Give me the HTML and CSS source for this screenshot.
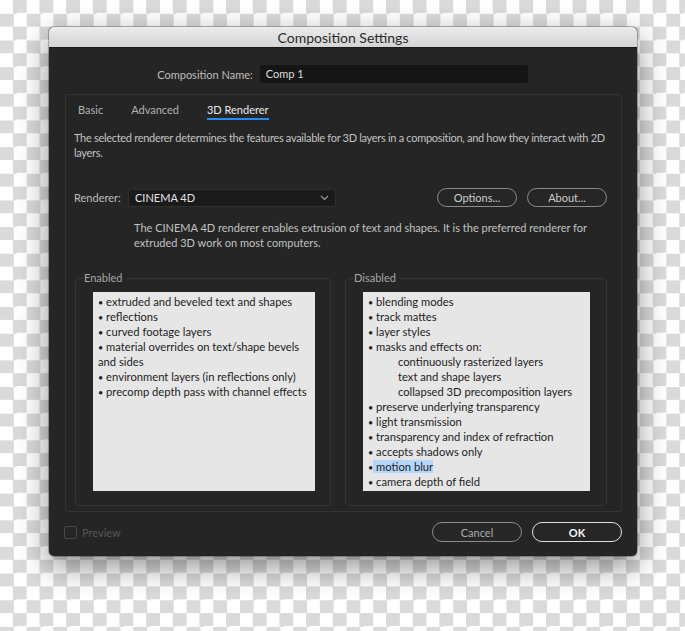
FILE: index.html
```html
<!DOCTYPE html>
<html lang="en">
<head>
    <meta charset="UTF-8">
    <meta name="viewport" content="width=device-width, initial-scale=1.0">
    <title>Composition Settings</title>
    <link rel="stylesheet" href="styles.css">
</head>
<body>
    <div class="window">
        <div class="titlebar">Composition Settings</div>
        <div class="content">
            <div class="name-row">
                <span class="name-label">Composition Name:</span>
                <div class="name-input">Comp 1</div>
            </div>

            <div class="panel">
                <div class="tabs">
                    <span class="tab">Basic</span>
                    <span class="tab">Advanced</span>
                    <span class="tab active">3D Renderer</span>
                </div>

                <p class="desc tight">The selected renderer determines the features available for 3D layers in a composition, and how they interact with 2D<br>layers.</p>

                <div class="renderer-row">
                    <span class="renderer-label">Renderer:</span>
                    <div class="select">
                        <span>CINEMA 4D</span>
                        <svg width="9" height="6" viewBox="0 0 9 6"><polyline points="1,1 4.5,4.5 8,1" fill="none" stroke="#9a9a9a" stroke-width="1.2"/></svg>
                    </div>
                    <div class="spacer"></div>
                    <button class="pill">Options...</button>
                    <button class="pill">About...</button>
                </div>

                <p class="renderer-desc">The CINEMA 4D renderer enables extrusion of text and shapes. It is the preferred renderer for<br>extruded 3D work on most computers.</p>

                <div class="groups">
                    <fieldset class="group">
                        <legend>Enabled</legend>
                        <ul class="list">
                            <li><b>&bull;</b> extruded and beveled text and shapes</li>
                            <li><b>&bull;</b> reflections</li>
                            <li><b>&bull;</b> curved footage layers</li>
                            <li><b>&bull;</b> material overrides on text/shape bevels<br>and sides</li>
                            <li><b>&bull;</b> environment layers (in reflections only)</li>
                            <li><b>&bull;</b> precomp depth pass with channel effects</li>
                        </ul>
                    </fieldset>
                    <fieldset class="group">
                        <legend>Disabled</legend>
                        <ul class="list">
                            <li><b>&bull;</b> blending modes</li>
                            <li><b>&bull;</b> track mattes</li>
                            <li><b>&bull;</b> layer styles</li>
                            <li><b>&bull;</b> masks and effects on:</li>
                            <li class="sub">continuously rasterized layers</li>
                            <li class="sub">text and shape layers</li>
                            <li class="sub">collapsed 3D precomposition layers</li>
                            <li><b>&bull;</b> preserve underlying transparency</li>
                            <li><b>&bull;</b> light transmission</li>
                            <li><b>&bull;</b> transparency and index of refraction</li>
                            <li><b>&bull;</b> accepts shadows only</li>
                            <li><b>&bull;</b><span class="selected"> motion blur</span></li>
                            <li><b>&bull;</b> camera depth of field</li>
                        </ul>
                    </fieldset>
                </div>
            </div>

            <div class="footer">
                <label class="preview"><span class="checkbox"></span>Preview</label>
                <div class="spacer"></div>
                <button class="pill wide">Cancel</button>
                <button class="pill wide ok">OK</button>
            </div>
        </div>
    </div>
</body>
</html>
```

FILE: styles.css
```css
body {
    margin: 0;
    height: 631px;
    overflow: hidden;
    font-family: "Lato", "Liberation Sans", sans-serif;
    font-size: 11px;
    background: repeating-conic-gradient(#dadada 0 25%, #ffffff 0 50%) 0 0 / 26.66px 26.66px;
}

.window {
    width: 588px;
    height: 529px;
    margin: 27px 0 0 49px;
    background: #252525;
    border-radius: 5px;
    overflow: hidden;
    box-shadow: 0 10px 30px rgba(0, 0, 0, 0.45), 0 0 0 1px rgba(0, 0, 0, 0.25);
}

.titlebar {
    height: 21px;
    line-height: 21px;
    text-align: center;
    font-size: 14px;
    color: #2a2a2a;
    background: linear-gradient(#ececec, #d3d3d3);
    border-bottom: 1px solid #1a1a1a;
    box-sizing: border-box;
}

.content {
    padding: 17px 15px 0 16px;
}

.name-row {
    display: flex;
    justify-content: center;
    align-items: center;
    gap: 7px;
    height: 18px;
    margin-left: -2px;
}

.name-label {
    color: #bdbdbd;
}

.name-input {
    width: 262px;
    height: 18px;
    line-height: 18px;
    padding-left: 6px;
    background: #151515;
    border-radius: 3px;
    color: #dcdcdc;
}

.panel {
    margin-top: 11px;
    height: 418px;
    box-sizing: border-box;
    border: 1px solid #343434;
    border-radius: 3px;
    padding: 7px 14px 0 8px;
}

.tabs {
    display: flex;
    gap: 28px;
    margin-left: 4px;
}

.tab {
    line-height: 15px;
    padding-bottom: 1px;
    border-bottom: 2px solid transparent;
    color: #b2b2b2;
}

.tab.active {
    color: #e8e8e8;
    border-bottom-color: #1f8df2;
}

.desc,
.renderer-desc {
    margin: 10px 0 0;
    line-height: 15px;
    color: #c2c2c2;
    white-space: nowrap;
}

.desc.tight {
    letter-spacing: -0.3px;
}

.renderer-row {
    display: flex;
    align-items: center;
    margin-top: 28px;
    height: 19px;
}

.renderer-label {
    color: #bdbdbd;
    width: 54px;
}

.select {
    width: 208px;
    height: 18px;
    padding: 0 6px;
    display: flex;
    align-items: center;
    justify-content: space-between;
    background: #1a1a1a;
    border: 1px solid #2f2f2f;
    box-sizing: border-box;
    color: #e2e2e2;
    border-radius: 2px;
}

.spacer {
    flex: 1;
}

.pill {
    font-family: inherit;
    font-size: 11px;
    height: 19px;
    width: 80px;
    padding: 0;
    margin-left: 10px;
    background: #262626;
    border: 1px solid #8b8b8b;
    border-radius: 10px;
    color: #cdcdcd;
}

.renderer-desc {
    margin: 13px 0 0 60px;
}

.groups {
    display: grid;
    grid-template-columns: 256px 262px;
    gap: 14px;
    margin: 21px 0 0 1px;
}

.group {
    margin: 0;
    height: 235px;
    box-sizing: border-box;
    padding: 7px 15px 0 17px;
    border: 1px solid #353535;
    border-radius: 4px;
}

.group + .group {
    padding: 7px 16px 0 17px;
}

.group legend {
    padding: 0 4px 0 0;
    margin-left: -9px;
    line-height: 14px;
    color: #a6a6a6;
}

.list {
    list-style: none;
    margin: 0;
    padding: 2px 0 0 5px;
    height: 199px;
    box-sizing: border-box;
    background: #e6e6e6;
    color: #1d1d24;
    font-size: 11.2px;
    line-height: 15px;
    white-space: nowrap;
}

.list b {
    font-weight: normal;
    font-size: 9px;
    line-height: 0;
}

.list .sub {
    padding-left: 30px;
}

.selected {
    background: #b4d6fb;
}

.footer {
    display: flex;
    align-items: center;
    margin-top: 10px;
    height: 20px;
}

.preview {
    display: flex;
    align-items: center;
    gap: 5px;
    color: #575757;
    margin-left: -1px;
}

.checkbox {
    width: 11px;
    height: 11px;
    border: 1px solid #474747;
    border-radius: 2px;
}

.pill.wide {
    width: 90px;
    height: 20px;
    color: #adadad;
}

.pill.ok {
    border-color: #e2e2e2;
    color: #f6f6f6;
    font-weight: bold;
}
```
